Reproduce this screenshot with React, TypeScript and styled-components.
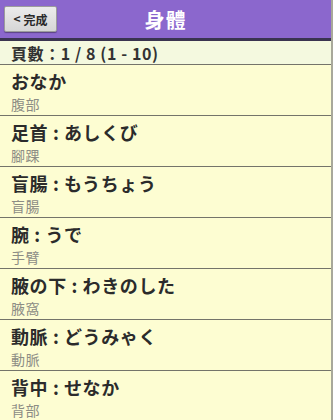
import * as React from "react";
import styled, {createGlobalStyle} from "styled-components";

const GlobalStyle = createGlobalStyle`
  html, body {
    margin: 0;
    padding: 0;
    background: #fdfdd2;
  }
  body {
    font-family: "Noto Sans CJK JP", "Noto Sans CJK TC", "Noto Sans", sans-serif;
  }
`;

const Screen = styled.div`
  width: 333px;
  height: 420px;
  display: flex;
  flex-direction: column;
  overflow: hidden;
  background: #fdfdd2;
  box-sizing: border-box;
  border-right: 2px solid #a8a89a;
`;

const Header = styled.div`
  height: 38px;
  display: grid;
  grid-template-columns: 60px 1fr 60px;
  align-items: center;
  background: #8b67cd;
  border-bottom: 3px solid #3a3450;
  flex-shrink: 0;
`;

const BackButton = styled.div`
  margin-left: 4px;
  height: 26px;
  width: 53px;
  box-sizing: border-box;
  display: flex;
  align-items: center;
  justify-content: center;
  gap: 3px;
  background: linear-gradient(#ececec, #d6d6d6);
  border: 1px solid #9c9c9c;
  border-radius: 2px;
  box-shadow: 0 1px 1px rgba(0, 0, 0, 0.35);
  font-size: 12px;
  font-weight: 700;
  color: #2a2a2a;
`;

const Chevron = styled.span`
  font-size: 12px;
  line-height: 1;
  margin-top: -1px;
`;

const Title = styled.div`
  text-align: center;
  color: #ffffff;
  font-size: 20px;
  font-weight: 700;
  letter-spacing: 1px;
`;

const PageBar = styled.div`
  height: 23px;
  display: flex;
  align-items: center;
  padding-left: 11px;
  background: #f4f9df;
  border-bottom: 1px solid #74746a;
  font-size: 16px;
  font-weight: 700;
  letter-spacing: 0.6px;
  color: #333333;
  flex-shrink: 0;
`;

const Row = styled.div`
  height: 51px;
  box-sizing: border-box;
  display: flex;
  flex-direction: column;
  padding: 4px 0 0 11px;
  border-bottom: 1px solid #74746a;
  flex-shrink: 0;
`;

const Word = styled.div`
  font-size: 18px;
  font-weight: 700;
  letter-spacing: 0.6px;
  color: #2b2b2b;
  line-height: 24px;
  white-space: pre;
`;

const Meaning = styled.div`
  margin-top: 2px;
  font-size: 14px;
  letter-spacing: 0.5px;
  color: #8d8d85;
  line-height: 18px;
`;

const words = [
    {word: "おなか", meaning: "腹部"},
    {word: "足首 : あしくび", meaning: "腳踝"},
    {word: "盲腸 : もうちょう", meaning: "盲腸"},
    {word: "腕 : うで", meaning: "手臂"},
    {word: "腋の下 : わきのした", meaning: "腋窩"},
    {word: "動脈 : どうみゃく", meaning: "動脈"},
    {word: "背中 : せなか", meaning: "背部"},
];

export default function App() {
    return <>
        <GlobalStyle/>
        <Screen>
            <Header>
                <BackButton><Chevron>&lt;</Chevron>完成</BackButton>
                <Title>身體</Title>
                <div/>
            </Header>
            <PageBar>頁數：1 / 8 (1 - 10)</PageBar>
            {words.map((w, k) => <Row key={k}>
                <Word>{w.word}</Word>
                <Meaning>{w.meaning}</Meaning>
            </Row>)}
        </Screen>
    </>;
}
